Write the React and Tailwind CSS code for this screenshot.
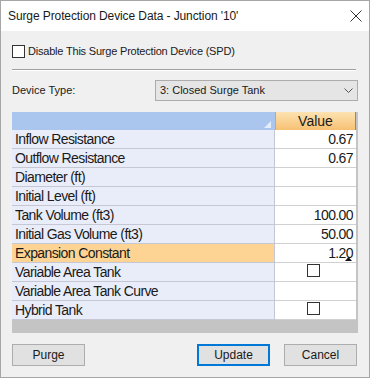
import { useState } from 'react'

const rows = [
  { label: 'Inflow Resistance', value: '0.67' },
  { label: 'Outflow Resistance', value: '0.67' },
  { label: 'Diameter (ft)', value: '' },
  { label: 'Initial Level (ft)', value: '' },
  { label: 'Tank Volume (ft3)', value: '100.00' },
  { label: 'Initial Gas Volume (ft3)', value: '50.00' },
  { label: 'Expansion Constant', value: '1.20', active: true },
  { label: 'Variable Area Tank', check: true },
  { label: 'Variable Area Tank Curve', value: '' },
  { label: 'Hybrid Tank', check: true },
]

function Box({ checked, onClick }) {
  return (
    <span onClick={onClick}
      className="inline-block w-[13px] h-[13px] border border-[#333] bg-white">
      {checked && (
        <svg viewBox="0 0 11 11" className="w-[11px] h-[11px]">
          <path d="M2 5.5 L4.5 8 L9 2.5" fill="none" stroke="#222" strokeWidth="1.4" />
        </svg>
      )}
    </span>
  )
}

export default function App() {
  const [disabled, setDisabled] = useState(false)
  const [flags, setFlags] = useState({})

  return (
    <div className="w-[370px] h-[378px] border border-[#a6a6a6] bg-[#f0f0f0] flex flex-col font-['Liberation_Sans',Arial,sans-serif] text-[#1a1a1a]">
      <div className="h-[30px] bg-white flex items-center justify-between pl-[7px] pr-[7px] shrink-0">
        <span className="text-[12px] tracking-[-0.1px]">Surge Protection Device Data - Junction '10'</span>
        <svg viewBox="0 0 12 12" className="w-[12px] h-[12px]">
          <path d="M0.5 0.5 L11.5 11.5 M11.5 0.5 L0.5 11.5" stroke="#333" strokeWidth="1" />
        </svg>
      </div>

      <div className="flex-1 px-[11px] flex flex-col">
        <label className="mt-[14px] flex items-center gap-[3px] text-[11px] tracking-[-0.2px] h-[13px]">
          <Box checked={disabled} onClick={() => setDisabled(!disabled)} />
          <span>Disable This Surge Protection Device (SPD)</span>
        </label>

        <div className="mt-[11px] mr-[2px] border-t border-[#a0a0a0] border-b border-b-white" />

        <div className="mt-[9px] flex items-center h-[21px]">
          <span className="w-[143px] text-[11px]">Device Type:</span>
          <div className="flex-1 h-[21px] border border-[#acacac] bg-[#e5e5e5] flex items-center justify-between pl-[4px] pr-[4px] text-[11px]">
            <span>3: Closed Surge Tank</span>
            <svg viewBox="0 0 9 5" className="w-[9px] h-[5px]">
              <path d="M0.5 0.5 L4.5 4.5 L8.5 0.5" fill="none" stroke="#555" strokeWidth="1" />
            </svg>
          </div>
        </div>

        <div className="mt-[11px] h-[221px] bg-[#c4c4c4] flex flex-col text-[14px] tracking-[-0.6px]">
          <div className="flex h-[18px] w-[344px]">
            <div className="w-[263px] bg-[#aac6ee] relative">
              <svg viewBox="0 0 7 7" className="absolute right-[4px] bottom-[2px] w-[7px] h-[7px]">
                <polygon points="7,0 7,7 0,7" fill="#e4eefb" />
              </svg>
            </div>
            <div className="flex-1 bg-gradient-to-b from-[#fde3b2] to-[#f7c072] border-l border-[#e6a24a] border-r border-r-[#b08050] flex items-center justify-center text-[14px] tracking-normal">
              Value
            </div>
          </div>
          {rows.map((r) => (
            <div key={r.label} className="flex h-[19px] w-[344px]">
              <div className={`w-[263px] border-b border-r border-[#c5c8d2] pl-[3px] flex items-center ${r.active ? 'bg-[#fdd494]' : 'bg-[#e9edf9]'}`}>
                {r.label}
              </div>
              <div className="flex-1 bg-white border-b border-[#d0d0d0] flex items-center justify-end pr-[3px] relative">
                {r.check ? (
                  <span className="mx-auto mr-[33px]">
                    <Box checked={!!flags[r.label]} onClick={() => setFlags({ ...flags, [r.label]: !flags[r.label] })} />
                  </span>
                ) : r.value}
                {r.active && (
                  <svg viewBox="0 0 7 4" className="absolute right-[4px] bottom-[1px] w-[7px] h-[4px]">
                    <polygon points="3.5,0 7,4 0,4" fill="#111" />
                  </svg>
                )}
              </div>
            </div>
          ))}
        </div>

        <div className="mt-[11px] flex items-center text-[12px]">
          <button className="w-[73px] h-[22px] border border-[#adadad] bg-[#e1e1e1]">Purge</button>
          <button className="ml-auto w-[73px] h-[22px] border-2 border-[#0078d7] bg-[#e1e1e1]">Update</button>
          <button className="ml-[14px] mr-[1px] w-[73px] h-[22px] border border-[#adadad] bg-[#e1e1e1]">Cancel</button>
        </div>
      </div>
    </div>
  )
}
